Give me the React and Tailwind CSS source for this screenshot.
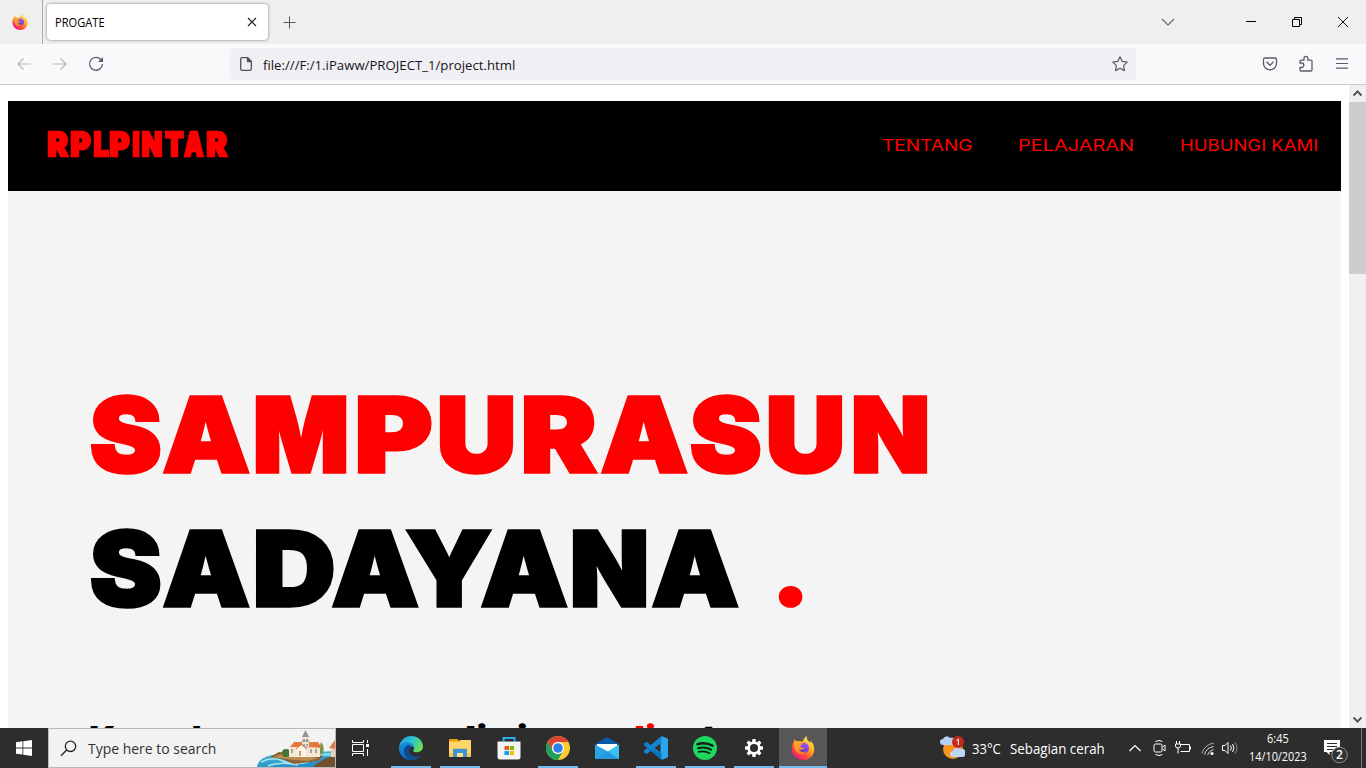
import { useLayoutEffect, useRef } from "react";

/* Text stretched horizontally to fill the width of its box. */
function Fit({ children, className = "" }) {
  const ref = useRef(null);
  useLayoutEffect(() => {
    const el = ref.current;
    const box = el.parentElement.clientWidth;
    el.style.transform = `scaleX(${box / el.offsetWidth})`;
  }, []);
  return (
    <div className={`shrink-0 ${className}`}>
      <span ref={ref} className="inline-block origin-left whitespace-nowrap">{children}</span>
    </div>
  );
}

/* Extra-heavy display lettering: each glyph gets its own [gap, width] in pixels. */
function Display({ text, metrics, size, stroke, className = "" }) {
  const ref = useRef(null);
  useLayoutEffect(() => {
    const ctx = document.createElement("canvas").getContext("2d");
    ctx.font = `900 ${size}px Inter`;
    [...ref.current.children].forEach((cell, i) => {
      const m = ctx.measureText(text[i]);
      const left = m.actualBoundingBoxLeft + stroke / 2;
      const ink = m.actualBoundingBoxLeft + m.actualBoundingBoxRight + stroke;
      const k = metrics[i][1] / ink;
      cell.firstChild.style.transform = `translateX(${left * k}px) scaleX(${k})`;
    });
  }, []);
  return (
    <span ref={ref} className={`flex shrink-0 ${className}`}>
      {[...text].map((ch, i) => (
        <span key={i} className="block shrink-0" style={{ marginLeft: metrics[i][0], width: metrics[i][1] }}>
          <span className="inline-block origin-left" style={{ fontSize: size, WebkitTextStroke: `${stroke}px currentColor` }}>{ch}</span>
        </span>
      ))}
    </span>
  );
}

const logoMetrics = [[0, 22], [1, 21], [2, 16], [0, 21], [2, 7], [2, 21], [2, 20], [-1, 21], [2, 22]];
const line1Metrics = [[0, 71], [2, 87], [5, 92], [10, 75], [7, 75], [9, 75], [3, 87], [2, 71], [7, 75], [10, 75]];
const line2Metrics = [[0, 71], [2, 87], [5, 79], [-2, 87], [-13, 86], [-11, 87], [4, 75], [5, 87]];

function Firefox({ size, id }) {
  return (
    <svg width={size} height={size} viewBox="0 0 24 24">
      <defs>
        <linearGradient id={`${id}a`} x1="0.85" y1="0.1" x2="0.2" y2="0.95">
          <stop offset="0" stopColor="#fff14a" />
          <stop offset="0.4" stopColor="#ffa21e" />
          <stop offset="0.7" stopColor="#ff4a3c" />
          <stop offset="1" stopColor="#f0128a" />
        </linearGradient>
        <linearGradient id={`${id}b`} x1="0.7" y1="0" x2="0.3" y2="1">
          <stop offset="0" stopColor="#a05cff" />
          <stop offset="1" stopColor="#5530b8" />
        </linearGradient>
        <linearGradient id={`${id}c`} x1="0" y1="0" x2="1" y2="1">
          <stop offset="0" stopColor="#ffb52a" />
          <stop offset="1" stopColor="#ff6a2a" />
        </linearGradient>
      </defs>
      <path d="M15.8 0c-.5 2 .1 3.300 1.400 4.700.7.700 1.500 1.500 2 2.400.3-.8.300-1.600.1-2.300 2.700 2.100 4 5.300 4 8.600C23.300 19.200 18.500 24 12.300 24 5.800 24 .700 19 .700 12.800c0-2.500.8-4.800 2-6.700 0-1.100.300-2.200.9-3 .5 1 1.300 1.800 2.300 2.200 2.500-.5 4.500.100 6 .300C12.300 3.300 13.600 1.200 15.800 0z" fill={`url(#${id}a)`} />
      <circle cx="12.600" cy="12" r="5.400" fill={`url(#${id}b)`} />
      <path d="M3 6.500C5 5.100 7.200 5.200 8.700 6.500c1.400-.2 2.800.3 3.500 1-.9.300-1 1.200-2 1.700-1 .5-1 1.300-.6 1.900.8 1 2.800.6 4 .3-.7 2.300-3.300 3-5.500 2 1 2.500 4.500 3.500 7.300 1.600-1.700 3.800-7 4.400-9.800 1C3.500 13.500 2.600 9.700 3 6.500z" fill={`url(#${id}c)`} />
    </svg>
  );
}

function Edge() {
  return (
    <svg width="24" height="24" viewBox="0 0 24 24">
      <defs>
        <linearGradient id="e1" x1="0" y1="0.2" x2="1" y2="0.6">
          <stop offset="0" stopColor="#219fe4" />
          <stop offset="0.5" stopColor="#2dc5cf" />
          <stop offset="1" stopColor="#6ae04c" />
        </linearGradient>
        <linearGradient id="e2" x1="0" y1="0" x2="0.3" y2="1">
          <stop offset="0" stopColor="#1b95e2" />
          <stop offset="1" stopColor="#0c60b8" />
        </linearGradient>
      </defs>
      <path d="M0 11C1 4.500 6 0 12 0c7 0 12 4.800 12 10.500 0 3.700-2.800 5.700-5.800 5.700-2.700 0-4.600-.9-4.100-1.800.9-1 1.200-1.900.9-3C14 7 4 6 0 11z" fill="url(#e1)" />
      <path d="M0 11.500C1.500 7 5.500 5.500 9 6.300c4 .8 6.200 3.200 6 5.700-.8-1.800-3.500-1.500-4.800.8-1.300 3 .8 6.500 4.800 7.700 3 .8 5.300 0 7.500-1.500C20 22.500 16.500 24 12 24 5 24-.5 18.500 0 11.500z" fill="url(#e2)" />
      <path d="M9 8.500c-3.800 2.200-4.800 6-3.300 9.500 1.500 3.700 4.600 5.800 8 5.700 3.500-.2 6.800-1.900 8.800-4.700-2 1.400-4.700 2.100-7.500 1.500-4-1.200-6.100-4.700-4.800-7.700.4-.8 1-1.400 1.700-1.600C11.400 10 10.500 8.800 9 8.500z" fill="#114a8b" />
    </svg>
  );
}

function Explorer() {
  return (
    <svg width="24" height="24" viewBox="0 0 24 24">
      <path d="M1 3h8.500l1.500 2v4H1z" fill="#e59e0b" />
      <path d="M1 5.500h10l1-1.500h11v17H1z" fill="#ffd667" />
      <path d="M1 17h22v4H1z" fill="#f8c64d" />
      <path d="M5 13.500q0-.7.700-.7h12.600q.7 0 .7.700V21h-4v-4H9v4H5z" fill="#3f94d8" />
      <path d="M9 17h6v4H9z" fill="#ffe08c" />
    </svg>
  );
}

function Store() {
  return (
    <svg width="24" height="24" viewBox="0 0 24 24">
      <path d="M6.500 7V2h11v5" fill="none" stroke="#2caeea" strokeWidth="2" />
      <path d="M.500 5.500h23V21a2.500 2.500 0 0 1-2.500 2.500H3A2.500 2.500 0 0 1 .500 21z" fill="#f4f4f4" />
      <path d="M6.500 5.500V4M17.500 5.500V4" stroke="#168bd0" strokeWidth="2" />
      <path d="M7.500 10H12v4H7.500z" fill="#f25022" />
      <path d="M12.800 10H17v4h-4.200z" fill="#7fba00" />
      <path d="M7.500 15H12v4H7.500z" fill="#00a4ef" />
      <path d="M12.800 15H17v4h-4.200z" fill="#ffb900" />
    </svg>
  );
}

function Chrome() {
  return (
    <svg width="24" height="24" viewBox="0 0 24 24">
      <circle cx="12" cy="12" r="12" fill="#fc3" />
      <path d="M1.600 6A12 12 0 0 1 22.400 6H12a6 6 0 0 0-5.200 9z" fill="#dc4437" />
      <path d="M1.600 6l5.200 9a6 6 0 0 0 7.700 2.500L12 24A12 12 0 0 1 1.600 6z" fill="#1fa15c" />
      <path d="M12 24l5.200-9L14 17z" fill="#1fa15c" />
      <circle cx="12" cy="12" r="6" fill="#fff" />
      <circle cx="12" cy="12" r="4.800" fill="#3080ee" />
    </svg>
  );
}

function Mail() {
  return (
    <svg width="24" height="24" viewBox="0 0 24 24">
      <path d="M0 8l12-7 12 7v7H0z" fill="#0a5aa5" />
      <path d="M2 8h20v7l-10 3-10-5z" fill="#fff" />
      <path d="M0 8.500L13 15.500 0 23z" fill="#2ba4e6" />
      <path d="M24 8.500v14.500H0z" fill="#3bc0f2" />
      <path d="M12.500 15.300L24 23H0z" fill="#249be0" />
    </svg>
  );
}

function VSCode() {
  return (
    <svg width="24" height="24" viewBox="0 0 24 24">
      <path d="M17.500 0L24 2.800v18.400L17.500 24l-1-6V6z" fill="#29a6ee" />
      <path d="M17.500 0v6.700L2.600 18 0 16.200v-1.600z" fill="#1684ce" />
      <path d="M17.500 24v-6.700L2.600 6 0 7.800v1.600z" fill="#0b75ba" />
      <path d="M17.500 17.300L2.600 6 0 7.800 5.500 13z" fill="#1482ca" />
    </svg>
  );
}

function Spotify() {
  return (
    <svg width="24" height="24" viewBox="0 0 24 24">
      <circle cx="12" cy="12" r="12" fill="#1ed760" />
      <path d="M4.500 8.200c5-1.500 10.500-1 15 1.500" fill="none" stroke="#121f17" strokeWidth="2.500" strokeLinecap="round" />
      <path d="M5.200 12.200c4.500-1.200 9-.7 12.800 1.500" fill="none" stroke="#121f17" strokeWidth="2.100" strokeLinecap="round" />
      <path d="M5.800 15.900c3.800-.9 7.500-.5 10.800 1.300" fill="none" stroke="#121f17" strokeWidth="1.700" strokeLinecap="round" />
    </svg>
  );
}

function Gear() {
  return (
    <svg width="20" height="20" viewBox="-10 -10 20 20">
      {[0, 45, 90, 135, 180, 225, 270, 315].map((a) => (
        <path key={a} d="M-2-5.500L-1.500-9h3L2-5.500z" fill="#fff" transform={`rotate(${a})`} />
      ))}
      <circle r="5.300" fill="none" stroke="#fff" strokeWidth="2.500" />
    </svg>
  );
}

const apps = [
  { icon: <Edge />, open: true },
  { icon: <Explorer />, open: true },
  { icon: <Store />, open: false },
  { icon: <Chrome />, open: true },
  { icon: <Mail />, open: false },
  { icon: <VSCode />, open: true },
  { icon: <Spotify />, open: true },
  { icon: <Gear />, open: true },
];

function TabBar() {
  return (
    <div className="flex h-11 shrink-0 items-center bg-[#efefef]">
      <div className="flex h-full w-[43px] items-center border-r border-[#a9a9ac] pl-3">
        <Firefox size={16} id="f" />
      </div>
      <div className="mb-px ml-1 flex h-[36px] w-[221px] items-center justify-between rounded bg-white pr-[11px] pl-2 shadow-[0_0_3px_rgba(0,0,0,0.5)]">
        <Fit className="mt-[2px] w-[50px] text-[12px] text-black">PROGATE</Fit>
        <svg width="10" height="10" viewBox="0 0 10 10" stroke="#222" strokeWidth="1.200"><path d="M1 1l8 8M9 1L1 9" /></svg>
      </div>
      <svg className="ml-[15px]" width="13" height="13" viewBox="0 0 13 13" stroke="#55555c"><path d="M6.500.500v12M.500 6.500h12" /></svg>
      <svg className="ml-auto" width="14" height="8" viewBox="0 0 14 8" fill="none" stroke="#68686e" strokeWidth="1.200"><path d="M1 1l6 6 6-6" /></svg>
      <svg className="ml-[71px]" width="10" height="2" fill="#000"><path d="M0 0h10v1H0z" /></svg>
      <svg className="ml-9" width="10" height="10" viewBox="0 0 10 10" fill="none" stroke="#000"><path d="M.500 2.500h7v7h-7zM2.500 2.500v-2h7v7h-2" /></svg>
      <svg className="mr-[18px] ml-9" width="10" height="10" viewBox="0 0 10 10" stroke="#111"><path d="M0 0l10 10M10 0L0 10" /></svg>
    </div>
  );
}

function Toolbar() {
  return (
    <div className="flex h-[41px] shrink-0 items-center border-b border-[#cacace] bg-[#f9f9fb]">
      <svg className="ml-[17px]" width="14" height="12" viewBox="0 0 14 12" fill="none" stroke="#b8b8bc" strokeWidth="1.200"><path d="M14 6H1M6.500.500L1 6l5.500 5.500" /></svg>
      <svg className="ml-[22px]" width="14" height="12" viewBox="0 0 14 12" fill="none" stroke="#b8b8bc" strokeWidth="1.200"><path d="M0 6h13M7.500.500L13 6l-5.500 5.500" /></svg>
      <svg className="ml-[21px]" width="16" height="16" viewBox="0 0 16 16" fill="none" stroke="#5b5b66" strokeWidth="1.300"><path d="M13.300 4.200A6.400 6.400 0 1 0 14.400 8" /><path d="M15 1v5h-5z" fill="#5b5b66" stroke="none" /></svg>
      <div className="ml-[126px] flex h-8 w-[906px] items-center rounded bg-[#f0f0f4]">
        <svg className="ml-[10px]" width="12" height="14" viewBox="0 0 12 14" fill="none" stroke="#50505a" strokeWidth="1.300"><path d="M2 .7h5.500l3.800 3.800V12a1.300 1.300 0 0 1-1.300 1.300H2A1.300 1.300 0 0 1 .7 12V2A1.300 1.300 0 0 1 2 .7z" /><path d="M7.500.700v3.800h3.800z" fill="#50505a" /></svg>
        <Fit className="mt-[3px] ml-[11px] w-[252px] text-[13.500px] text-[#15141a]">file:///F:/1.iPaww/PROJECT_1/project.html</Fit>
        <svg className="mr-2 ml-auto" width="16" height="16" viewBox="0 0 16 16" fill="none" stroke="#5b5b66" strokeWidth="1.200" strokeLinejoin="round"><path d="M8 .8l2.200 4.600 5 .7-3.600 3.500.9 5L8 12.200l-4.500 2.400.9-5L.8 6.100l5-.7z" /></svg>
      </div>
      <svg className="ml-[126px]" width="16" height="14" viewBox="0 0 16 14" fill="none" stroke="#5b5b66" strokeWidth="1.300"><path d="M2.500 1h10.500a1.500 1.500 0 0 1 1.500 1.500V6.500a6.500 6.300 0 0 1-13 0V2.500A1.500 1.500 0 0 1 2.500 1z" /><path d="M4.500 4.800L8 8.300l3.500-3.500" /></svg>
      <svg className="mb-px ml-5" width="16" height="17" viewBox="0 0 16 17" fill="none" stroke="#5b5b66" strokeWidth="1.300"><path d="M2 8V6.200a1 1 0 0 1 1-1h3V3.300a1.900 1.900 0 0 1 3.800 0v1.900h3.200a1 1 0 0 1 1 1V15a1 1 0 0 1-1 1H3a1 1 0 0 1-1-1v-2.500h1.600a2 2 0 0 0 0-4.500z" /></svg>
      <svg className="mb-px ml-[22px]" width="12" height="11" viewBox="0 0 12 11" stroke="#5b5b66" strokeWidth="1.200"><path d="M0 .800h12M0 5.500h12M0 10.200h12" /></svg>
    </div>
  );
}

function Page() {
  return (
    <div className="flex min-h-0 flex-1 bg-white">
      <main className="mt-4 ml-2 flex w-[1333px] flex-col overflow-hidden bg-[#f4f4f4] font-[Inter,sans-serif]">
        <header className="flex h-[90px] shrink-0 items-center bg-black text-[#f00]">
          <Display text="RPLPINTAR" metrics={logoMetrics} size={32.5} stroke={2.4} className="mt-[2px] ml-[39px] leading-[86px] font-black" />
          <nav className="mb-[2px] ml-auto flex gap-[46px] pr-[23px] text-[16.500px] leading-[88px]">
            <Fit className="w-[90px]">TENTANG</Fit>
            <Fit className="w-[116px]">PELAJARAN</Fit>
            <Fit className="w-[138px]">HUBUNGI KAMI</Fit>
          </nav>
        </header>
        <h1 className="mt-[176px] flex h-[268px] shrink-0 flex-col pt-px pl-[82px] leading-[134px] font-black">
          <Display text="SAMPURASUN" metrics={line1Metrics} size={102.5} stroke={3.4} className="h-[134px] text-[#f00]" />
          <span className="flex h-[134px]">
            <Display text="SADAYANA" metrics={line2Metrics} size={102.5} stroke={3.4} className="text-black" />
            <Display text="." metrics={[[39, 25]]} size={102.5} stroke={1.5} className="text-[#f00]" />
          </span>
        </h1>
        <h2 className="flex h-10 shrink-0 pt-[83px] pl-[81px] text-[32px] leading-[40px] font-black whitespace-nowrap text-black">
          <Fit className="w-[146px]">Kumaha</Fit>
          <Fit className="ml-[217px] w-[76px]">di si</Fit>
          <Fit className="ml-[93px] w-[35px] text-[#f00]">di</Fit>
          <Fit className="ml-[46px] w-[15px]">t</Fit>
        </h2>
      </main>
      <div className="ml-2 flex w-[17px] flex-col items-center bg-[#f0f0f0]">
        <svg className="mt-1 shrink-0" width="11" height="9" viewBox="0 0 11 9" fill="none" stroke="#555" strokeWidth="2"><path d="M1.500 6.500l4-4 4 4" /></svg>
        <div className="mt-1 h-[172px] w-full shrink-0 bg-[#cdcdcd]" />
        <svg className="mt-auto mb-1 shrink-0" width="11" height="9" viewBox="0 0 11 9" fill="none" stroke="#555" strokeWidth="2"><path d="M1.500 2.500l4 4 4-4" /></svg>
      </div>
    </div>
  );
}

function Town() {
  return (
    <svg width="79" height="38" viewBox="0 0 79 38">
      <defs>
        <linearGradient id="sea" x1="0" y1="0" x2="0.500" y2="1">
          <stop offset="0" stopColor="#58c0df" /><stop offset="1" stopColor="#248dc5" />
        </linearGradient>
      </defs>
      <path d="M1 38C2 29 12 26 24 25l55-3v16z" fill="url(#sea)" />
      <path d="M65 24h14v3H62z" fill="#80d7e8" />
      <path d="M5 33q12-6 22-1t25 1M12 37q12-5 30-1" stroke="#a4e6ef" strokeWidth="1.500" fill="none" />
      <path d="M14 28l9-5 35 2 9 2-5 5-24 3-12-5z" fill="#8c5f35" />
      <path d="M17 28l8-3 30 3 8 1-11 3-15-1z" fill="#bd8c50" />
      <path d="M60 35l10-6 9-2v11H57z" fill="#73502e" />
      <circle cx="30" cy="24" r="4" fill="#407735" /><circle cx="62" cy="21" r="4" fill="#6b8d3d" />
      <path d="M65 13q4 4 2 12h-5z" fill="#739647" />
      <path d="M33 17h13v11H33zM51 17h13v11H51z" fill="#f5e9d7" />
      <path d="M34 18l4-5h8v5zM50 18l3-5h9l4 6z" fill="#e4793d" />
      <path d="M46 8h7v20h-7z" fill="#eee4dc" /><path d="M45 12h9M45 18h9" stroke="#b7aaa1" />
      <path d="M46 8l3.500-7L53 8z" fill="#96908f" />
      <path d="M41 28v-8l4-4 5 4v8z" fill="#fff3df" /><path d="M40 20l5-5 6 5" stroke="#d76535" fill="none" />
      <path d="M48 10v3M51 10v3M48 15v2M51 15v2M36 20v4M44 22v5M55 20v4M60 20v4" stroke="#675b59" />
      <path d="M73 19l6-8v9z" fill="#df7845" /><path d="M75 20h4v8h-4z" fill="#ead0b5" />
    </svg>
  );
}

function Taskbar() {
  return (
    <div className="flex h-10 shrink-0 items-center bg-[#2d2d2d] text-white">
      <div className="flex w-12 shrink-0 justify-center">
        <svg width="16" height="16" viewBox="0 0 16 16" fill="#fff"><path d="M0 2.200L6.500 1.300v6.200H0zM7.300 1.200L16 0v7.500H7.300zM0 8.400h6.500v6.200L0 13.700zM7.300 8.400H16V16l-8.700-1.300z" /></svg>
      </div>
      <div className="flex h-10 w-72 shrink-0 items-center border border-[#bababa] bg-[#f2f2f2] text-[#333]">
        <svg className="ml-[11px] shrink-0" width="17" height="17" viewBox="0 0 17 17" fill="none" stroke="#222" strokeWidth="1.300"><circle cx="10.500" cy="6.300" r="5.200" /><path d="M6.700 10L1 15.800" /></svg>
        <Fit className="mt-px ml-[11px] w-[128px] text-[14.500px]">Type here to search</Fit>
        <div className="ml-auto shrink-0"><Town /></div>
      </div>
      <div className="flex w-[51px] shrink-0 pl-4">
        <svg width="17" height="16" viewBox="0 0 17 16" fill="none" stroke="#fff"><path d="M.500 0v2.500h11V0M.500 4.500h11v7H.500zM.500 16v-2.500h11V16M15.500 0v3M15.500 9v7" /><path d="M14 4h3v3h-3z" fill="#fff" stroke="none" /></svg>
      </div>
      <div className="flex h-full gap-px">
        {apps.map((a, i) => (
          <div key={i} className="flex w-12 flex-col items-center">
            <div className="flex h-[38px] items-center pt-[2px]">{a.icon}</div>
            {a.open && <div className="h-[2px] w-10 bg-[#76b9ed]" />}
          </div>
        ))}
        <div className="flex w-12 flex-col items-center bg-[#575757]">
          <div className="flex h-[38px] items-center pt-[2px]">
            <Firefox size={24} id="t" />
          </div>
          <div className="h-[2px] w-full bg-[#76b9ed]" />
        </div>
      </div>
      <div className="ml-[113px] flex shrink-0 items-center">
        <svg width="25" height="24" viewBox="0 0 25 24">
          <circle cx="13" cy="13" r="10" fill="#f7941d" />
          <path d="M3 9a3 3 0 0 1 0-6 4 4 0 0 1 7-1 3.500 3.500 0 0 1 3 7z" fill="#b7cff5" />
          <path d="M13 21a3 3 0 0 1 0-6 4 4 0 0 1 7-2 4 4 0 0 1 3 8z" fill="#bdd4f6" />
          <circle cx="18" cy="6" r="6" fill="#c42b1c" />
          <path d="M16.500 4.500L18.300 3v6" fill="none" stroke="#fff" />
        </svg>
        <Fit className="ml-[7px] w-[29px] text-[14px]">33°C</Fit>
        <Fit className="ml-[9px] w-[95px] text-[14px]">Sebagian cerah</Fit>
      </div>
      <svg className="ml-6 shrink-0" width="12" height="8" viewBox="0 0 12 8" fill="none" stroke="#fff" strokeWidth="1.200"><path d="M.500 7L6 1.500 11.500 7" /></svg>
      <svg className="ml-3 shrink-0" width="13" height="16" viewBox="0 0 13 16" fill="none" stroke="#fff"><path d="M2.500 1.500q3.500-2 7 0M2.500 14.500q3.500 2 7 0" /><rect x="1" y="4" width="8" height="8" rx="1.500" /><path d="M9.500 7L12 5v6L9.500 9" /></svg>
      <svg className="mb-px ml-[9px] shrink-0" width="17" height="13" viewBox="0 0 17 13" fill="none" stroke="#fff"><path d="M6 3.500h8.500v7H5.500M15.500 5.500v3M1.500 0v3M4.500 0v3M.500 3h5v2q0 2-2.500 2T.500 5zM3 7v5.500" /></svg>
      <svg className="mt-[2px] ml-[9px] shrink-0" width="14" height="14" viewBox="0 0 14 14" fill="none" stroke="#ddd"><path d="M1 11.500Q3 3 12.500 1" stroke="#aaa" /><path d="M3.500 12.500Q5 6 12.500 4.500M6.500 13Q8 9 12.500 7.500" /><circle cx="11" cy="11.500" r="1.600" fill="#fff" stroke="none" /></svg>
      <svg className="ml-[7px] shrink-0" width="17" height="14" viewBox="0 0 17 14" fill="none" stroke="#fff"><path d="M.500 4.500h2.500l3-3v11l-3-3H.500zM8.500 4.500q1.700 2.500 0 5M10.500 3q3 4 0 8" /><path d="M13 1.500q4 5.500 0 11" stroke="#888" /></svg>
      <div className="mb-px ml-[10px] flex w-[58px] shrink-0 flex-col items-center text-[12px] leading-[18px]">
        <Fit className="w-[22px]">6:45</Fit>
        <Fit className="w-[58px]">14/10/2023</Fit>
      </div>
      <div className="relative mt-[5px] ml-[17px] h-6 w-[26px] shrink-0">
        <svg width="26" height="26" viewBox="0 0 26 26">
          <path d="M0 1h16v12H5.500v3l-3-3H0z" fill="#fff" />
          <path d="M3 4.500h10M3 7.500h10M3 10.500h6" stroke="#2d2d2d" />
          <circle cx="15.500" cy="16" r="7.800" fill="#333" stroke="#8b8b8b" />
        </svg>
        <span className="absolute top-[8px] left-[12px] text-[12px] leading-4 font-semibold">2</span>
      </div>
      <div className="ml-auto h-full w-[5px] shrink-0 border-l border-[#777]" />
    </div>
  );
}

export default function App() {
  return (
    <div className="flex h-[768px] w-[1366px] flex-col overflow-hidden font-['Open_Sans','Noto_Sans',sans-serif]">
      <TabBar />
      <Toolbar />
      <Page />
      <Taskbar />
    </div>
  );
}
